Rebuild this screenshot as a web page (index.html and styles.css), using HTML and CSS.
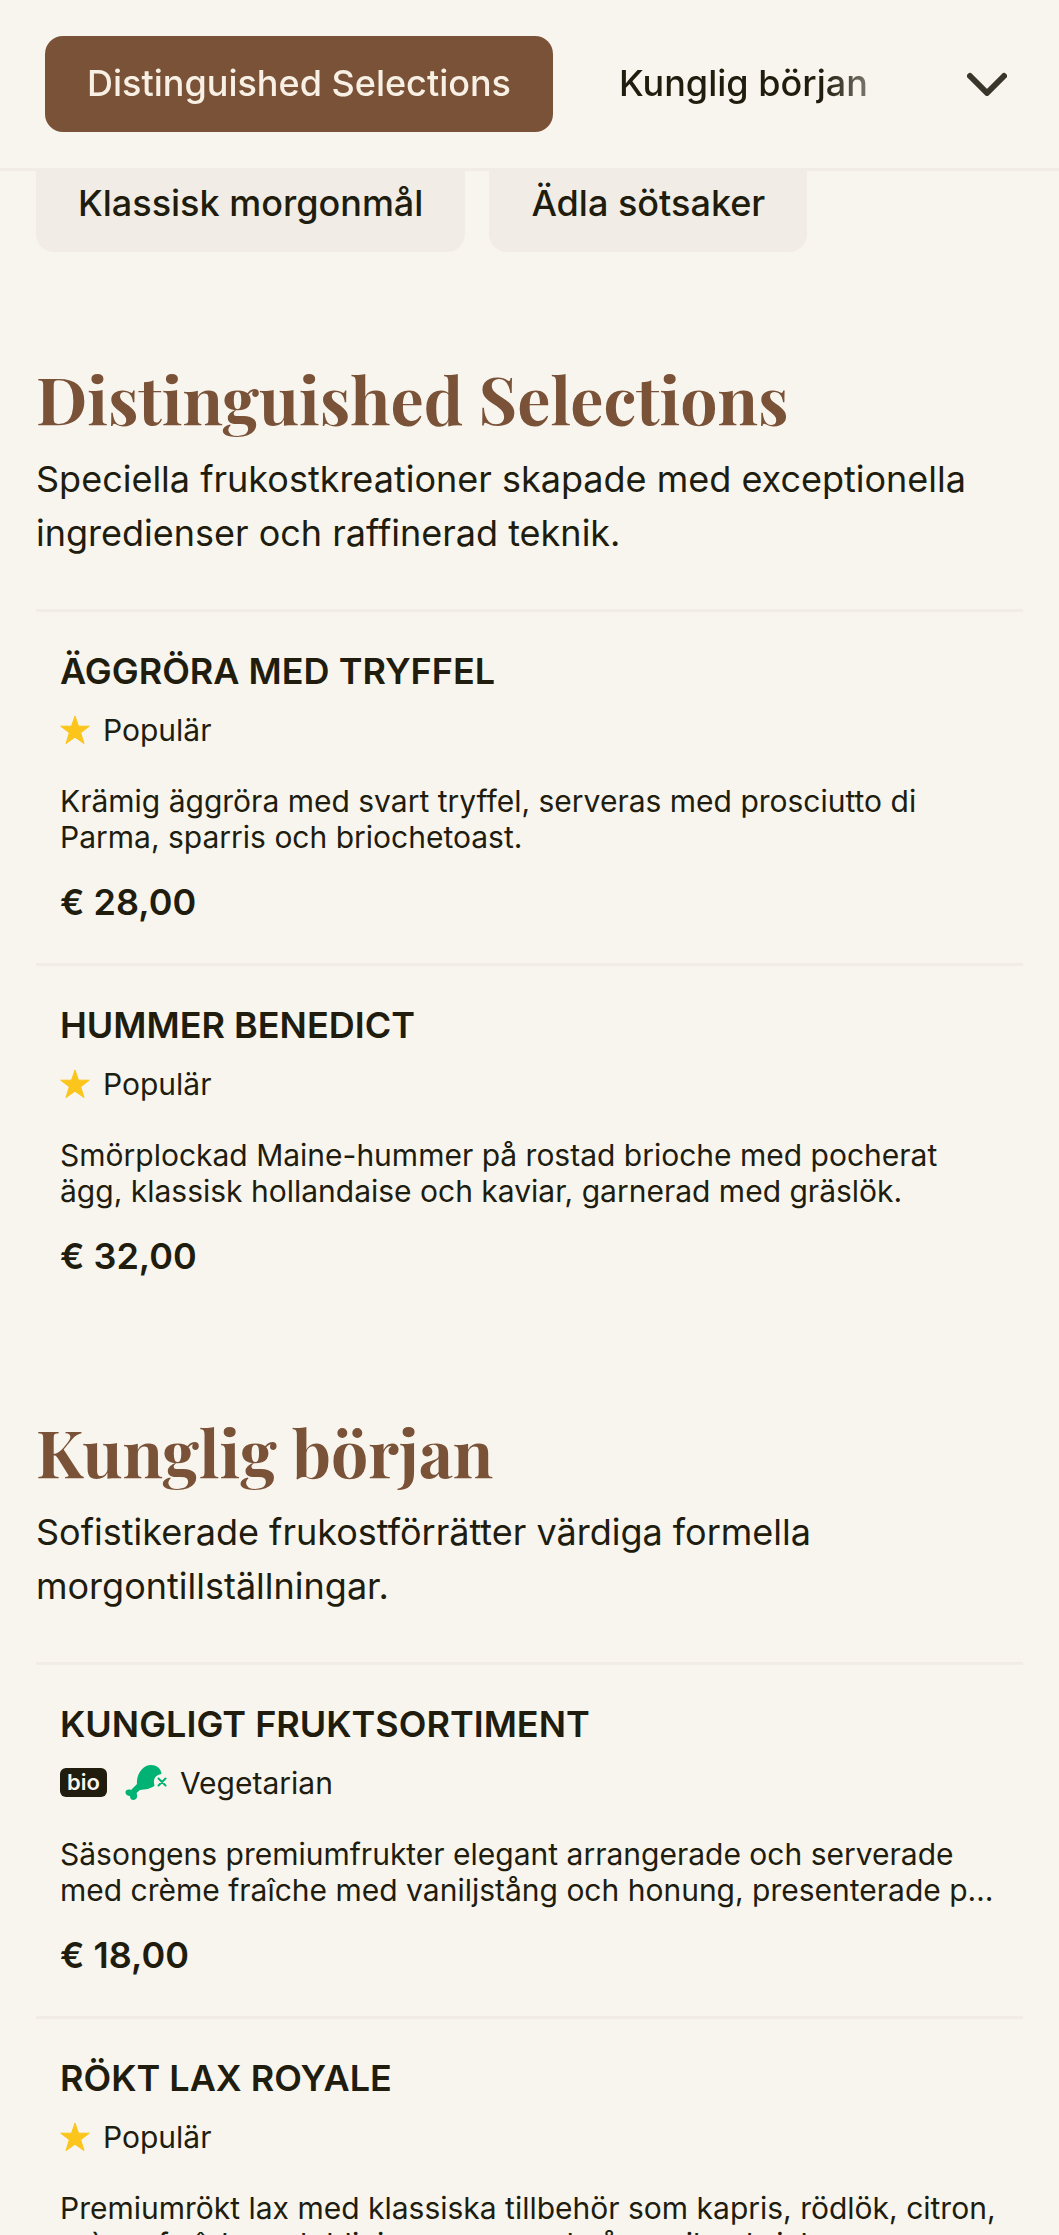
FILE: index.html
```html
<!DOCTYPE html>
<html lang="sv">
<head>
  <meta charset="UTF-8">
  <meta name="viewport" content="width=device-width, initial-scale=1.0">
  <title>Frukostmeny</title>
  <link rel="stylesheet" href="styles.css">
</head>
<body>

  <!-- Icons shared by the menu items -->
  <svg class="sprite" aria-hidden="true">
    <symbol id="star" viewBox="0 0 30 30">
      <path d="M15 1l3.5 10.2h10.8l-8.6 6.6 3.3 10.8L15 22.2l-9 6.4 3.3-10.8-8.6-6.6h10.8z" fill="#fbc51b" stroke="#fbc51b" stroke-linejoin="round"/>
    </symbol>
    <symbol id="veggie" viewBox="0 0 42 37">
      <path d="M12 20C11 12 17 1 26 1c5 0 10 3 10.500 9-4 .5-7 3-7.500 6.500-.3 2 .2 4 .6 5C26 25 20 25.500 15 26l-3.500 3c1.500 3 .5 7-3 7-2.500 0-3.500-1.500-3.500-4-2.500 0-4.500-1.500-4.500-3.500C.5 25.500 3.500 25 6 26z" fill="#00b273"/>
      <path d="M33.500 14.500l7 7m0-7l-7 7" stroke="#00b273" stroke-width="2" stroke-linecap="round"/>
    </symbol>
  </svg>

  <header class="topbar">
    <nav class="tabs">
      <a class="tab active" href="#distinguished">Distinguished Selections</a>
      <a class="tab" href="#kunglig">Kunglig början</a>
    </nav>
    <button class="toggle" type="button" aria-label="Visa alla kategorier">
      <svg viewBox="0 0 40 24" fill="none" stroke="#39352a" stroke-width="6" stroke-linecap="round" stroke-linejoin="round"><path d="M3 4l17 17L37 4"/></svg>
    </button>
  </header>

  <main class="menu">
    <div class="chips">
      <a class="chip" href="#klassisk">Klassisk morgonmål</a>
      <a class="chip" href="#adla">Ädla sötsaker</a>
    </div>

    <section class="category" id="distinguished">
      <h2>Distinguished Selections</h2>
      <p class="intro">Speciella frukostkreationer skapade med exceptionella ingredienser och raffinerad teknik.</p>

      <article class="item">
        <h3>ÄGGRÖRA MED TRYFFEL</h3>
        <div class="tags"><svg class="star"><use href="#star"/></svg><span>Populär</span></div>
        <p class="desc">Krämig äggröra med svart tryffel, serveras med prosciutto di Parma, sparris och briochetoast.</p>
        <p class="price">€ 28,00</p>
      </article>

      <article class="item">
        <h3>HUMMER BENEDICT</h3>
        <div class="tags"><svg class="star"><use href="#star"/></svg><span>Populär</span></div>
        <p class="desc">Smörplockad Maine-hummer på rostad brioche med pocherat ägg, klassisk hollandaise och kaviar, garnerad med gräslök.</p>
        <p class="price">€ 32,00</p>
      </article>
    </section>

    <section class="category" id="kunglig">
      <h2>Kunglig början</h2>
      <p class="intro">Sofistikerade frukostförrätter värdiga formella morgontillställningar.</p>

      <article class="item">
        <h3>KUNGLIGT FRUKTSORTIMENT</h3>
        <div class="tags"><span class="bio">bio</span><svg class="veggie"><use href="#veggie"/></svg><span>Vegetarian</span></div>
        <p class="desc">Säsongens premiumfrukter elegant arrangerade och serverade med crème fraîche med vaniljstång och honung, presenterade p…</p>
        <p class="price">€ 18,00</p>
      </article>

      <article class="item">
        <h3>RÖKT LAX ROYALE</h3>
        <div class="tags"><svg class="star"><use href="#star"/></svg><span>Populär</span></div>
        <p class="desc">Premiumrökt lax med klassiska tillbehör som kapris, rödlök, citron, crème fraîche och blinis, arrangerad på en silverbricka.</p>
      </article>
    </section>
  </main>

</body>
</html>
```
FILE: styles.css
```css
* {
  box-sizing: border-box;
}

html {
  scrollbar-width: none;
}

body {
  margin: 0;
  font-family: Inter, sans-serif;
  font-size: 36px;
  line-height: 54px;
  background: #f8f5ee;
  color: #201c0e;
}

h2, h3, p {
  margin: 0;
}

a {
  color: inherit;
  text-decoration: none;
}

.sprite {
  display: none;
}

/* Sticky category bar */
.topbar {
  position: fixed;
  top: 0;
  left: 0;
  right: 0;
  z-index: 10;
  display: flex;
  align-items: center;
  padding: 36px 52px 36px 45px;
  background: #f8f5ee;
  border-bottom: 3px solid #f1ede6;
}

.tabs {
  flex: 1;
  display: flex;
  gap: 24px;
  margin-right: 96px;
  overflow: hidden;
  white-space: nowrap;
  -webkit-mask-image: linear-gradient(to right, #000 calc(100% - 48px), transparent calc(100% + 60px));
  mask-image: linear-gradient(to right, #000 calc(100% - 48px), transparent calc(100% + 60px));
}

.tab, .chip {
  padding: 20px 42px 22px;
  border-radius: 18px;
  font-weight: 500;
}

.tab.active {
  background: #7a5238;
  color: #f8f0e4;
}

.toggle {
  display: flex;
  padding: 0;
  border: none;
  background: none;
  cursor: pointer;
}

.toggle svg {
  width: 40px;
  height: 24px;
}

/* Menu */
.menu {
  padding: 156px 36px 0;
}

.chips {
  display: flex;
  gap: 24px;
  margin-bottom: 101px;
}

.chip {
  background: #f1ede6;
}

.category + .category {
  margin-top: 89px;
}

.category h2 {
  margin-bottom: 9px;
  font-family: "Playfair Display", "Liberation Serif", serif;
  font-size: 66px;
  line-height: 90px;
  font-weight: 700;
  color: #7a5238;
}

.intro {
  margin-bottom: 49px;
}

.item {
  padding: 32px 24px 34px;
  border-top: 3px solid #f1ede6;
}

.item h3 {
  font-size: 36px;
  font-weight: 600;
}

.tags {
  display: flex;
  align-items: center;
  height: 45px;
  margin: 9px 0 31px;
  font-size: 30px;
}

.star {
  width: 30px;
  height: 30px;
  margin-right: 13px;
}

.bio {
  padding: 0 7px;
  margin-right: 18px;
  border-radius: 6px;
  background: #201c0e;
  color: #f8f5ee;
  font-size: 22px;
  line-height: 29px;
  font-weight: 600;
}

.veggie {
  width: 42px;
  height: 37px;
  margin-right: 13px;
}

.desc {
  display: -webkit-box;
  -webkit-box-orient: vertical;
  -webkit-line-clamp: 2;
  overflow: hidden;
  margin-bottom: 20px;
  font-size: 30px;
  line-height: 36px;
}

.price {
  font-weight: 600;
}
```
